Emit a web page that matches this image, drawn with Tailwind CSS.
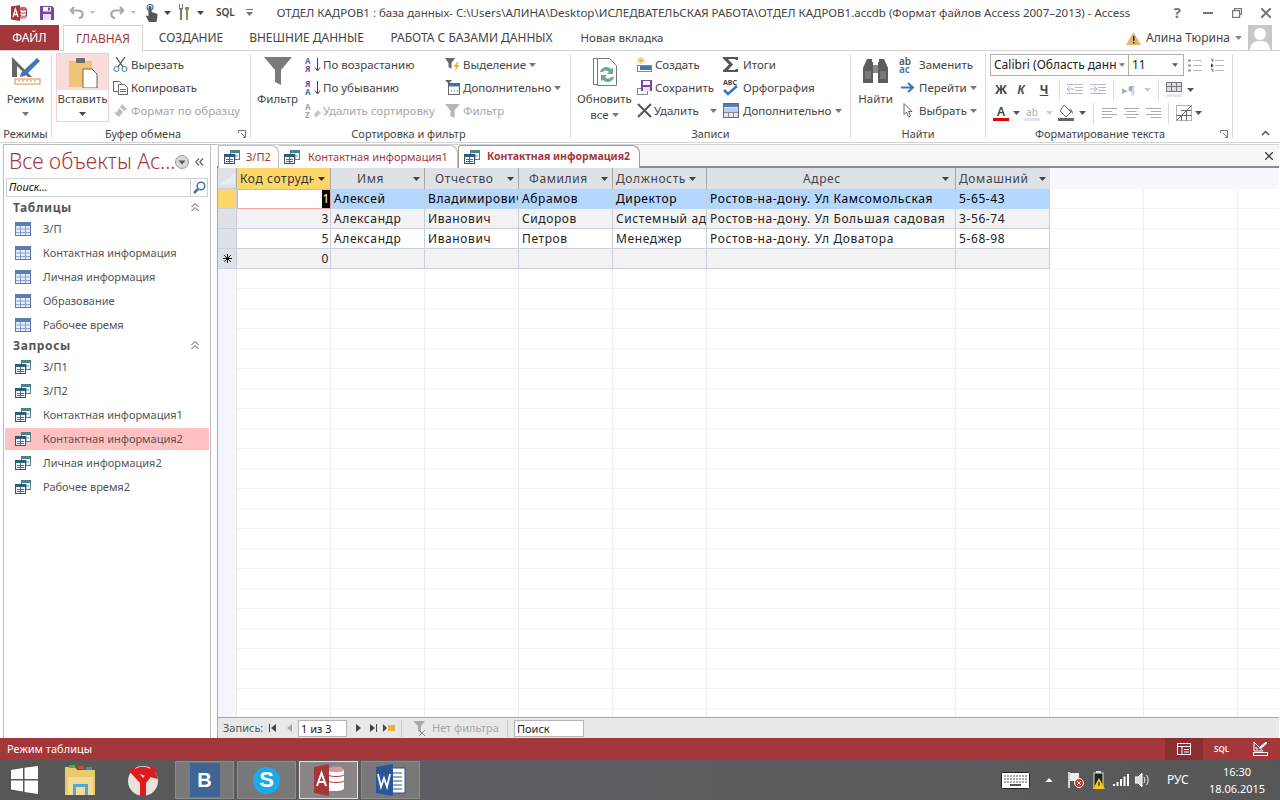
<!DOCTYPE html>
<html lang="ru">
<head>
  <meta charset="UTF-8">
  <title>Access</title>
  <script src="https://cdn.jsdelivr.net/npm/@tailwindcss/browser@4"></script>
</head>
<body class="overflow-hidden">
  <svg class="absolute w-0 h-0">
    <defs>
      <symbol id="tbl" viewBox="0 0 16 14"><rect x=".5" y=".5" width="15" height="13" fill="#e4ebf6" stroke="#5e7ca8"/><rect x="1" y="1" width="14" height="3" fill="#5b7db5"/><path d="M1 7h14M1 10.500h14M5.500 4v9M10.500 4v9" stroke="#8ba3c7"/></symbol>
      <symbol id="qry" viewBox="0 0 16 14"><rect x="6.500" y=".5" width="9" height="9" fill="#fff" stroke="#4f8088"/><rect x="7" y="1" width="8" height="2" fill="#3f8590"/><path d="M11 3.500v6M8 6h6" stroke="#6f8f95"/><rect x=".5" y="4.500" width="10" height="9" fill="#f2f6f7" stroke="#33566b"/><rect x="1" y="5" width="9" height="2" fill="#2f5f80"/><path d="M5.500 7v6M2 9.500h7M2 11.500h7" stroke="#51718a"/></symbol>
      <symbol id="dn" viewBox="0 0 7 4"><path d="M0 0h7L3.500 4z"/></symbol>
    </defs>
  </svg>

  <div class="w-[1280px] h-[800px] flex flex-col overflow-hidden bg-white text-[#444] text-[12px] [font-family:'Noto_Sans',sans-serif]">

    <!-- title bar -->
    <div class="h-[25px] flex items-center shrink-0">
      <svg class="ml-[11px] w-[16px] h-[16px]" viewBox="0 0 16 16"><path d="M0 1.500 9 0v16l-9-1.500z" fill="#a4373a"/><ellipse cx="12" cy="3.500" rx="3.500" ry="1.800" fill="#c9696b"/><path d="M9 4v9h3.500c2 0 3-.8 3-1.500V4c-1 1.500-5 1.500-6 0z" fill="#fff" stroke="#a4373a"/><path d="M9 7.500c1.500 1 5 1 6.500 0M9 10.500c1.500 1 5 1 6.500 0" stroke="#a4373a" fill="none"/><path d="M2 12 4.500 4 7 12M3 9.500h3" stroke="#fff" stroke-width="1.300" fill="none"/></svg>
      <svg class="ml-[13px] w-[14px] h-[14px]" viewBox="0 0 14 14"><path d="M0 0h12l2 2v12H0z" fill="#7b45a8"/><rect x="3" y="1" width="8" height="4.500" fill="#fff"/><rect x="3" y="8" width="8" height="6" fill="#e9dff2"/><rect x="8" y="1.500" width="2" height="3" fill="#7b45a8"/></svg>
      <svg class="ml-[15px] w-[15px] h-[13px]" viewBox="0 0 15 13" fill="none" stroke="#a9a9a9" stroke-width="2.200"><path d="M5 1 1.800 4.500 5 8M2 4.500h7c6 0 6 7 1 7.500"/></svg>
      <svg class="ml-[6px] w-[5px] h-[3px] text-[#bbb] fill-current"><use href="#dn"/></svg>
      <svg class="ml-[15px] w-[15px] h-[13px]" viewBox="0 0 15 13" fill="none" stroke="#a9a9a9" stroke-width="2.200"><path d="m10 1 3.200 3.500L10 8m3-3.500H6c-6 0-6 7-1 7.500"/></svg>
      <svg class="ml-[6px] w-[5px] h-[3px] text-[#bbb] fill-current"><use href="#dn"/></svg>
      <svg class="ml-[9px] w-[13px] h-[18px]" viewBox="0 0 13 18"><circle cx="5" cy="3.500" r="3" fill="none" stroke="#3d76b8" stroke-width="1.200"/><path d="M3.500 3.500c0-2 3-2 3 0V8l5 1.500c1 .5 1.200 1 1 2L11.500 18H4L.5 11.500 3.500 12z" fill="#555"/></svg>
      <svg class="ml-[6px] w-[7px] h-[4px] text-[#444] fill-current"><use href="#dn"/></svg>
      <svg class="ml-[6px] w-[13px] h-[17px]" viewBox="0 0 13 17"><path d="M2 0v5l1 1v10h2V6l1-1V0H5v4H3V0z" fill="#777"/><path d="M8 3h4v3h-1v10H9V6H8z" fill="#9a8a5a"/></svg>
      <svg class="ml-[7px] w-[7px] h-[4px] text-[#444] fill-current"><use href="#dn"/></svg>
      <span class="ml-[12px] text-[10px] font-semibold text-[#444]">SQL</span>
      <svg class="ml-[11px] w-[7px] h-[7px]" viewBox="0 0 7 7"><path d="M0 0h7v1H0zM0 3h7L3.500 7z" fill="#777"/></svg>
      <span class="ml-[24px] w-[860px] whitespace-nowrap text-[#444] text-[11.500px]">ОТДЕЛ КАДРОВ1 : база данных- C:\Users\АЛИНА\Desktop\ИСЛЕДВАТЕЛЬСКАЯ РАБОТА\ОТДЕЛ КАДРОВ1.accdb (Формат файлов Access 2007–2013) - Access</span>
      <span class="ml-[37px] w-[12px] text-[15px] font-bold text-[#777] leading-none">?</span>
      <span class="ml-[17px] w-[10px] h-[2px] bg-[#777]"></span>
      <svg class="ml-[19px] w-[10px] h-[10px]" viewBox="0 0 10 10" fill="none" stroke="#777" stroke-width="1.200"><path d="M2.500 2V.6h7v5.800H8"/><rect x=".6" y="2.600" width="7" height="6.800"/></svg>
      <svg class="ml-[19px] w-[10px] h-[10px]" viewBox="0 0 10 10" stroke="#777" stroke-width="2"><path d="m0 0 10 10M10 0 0 10"/></svg>
    </div>

    <!-- ribbon tabs -->
    <div class="h-[26px] flex shrink-0 border-b border-[#d4d4d4] text-[12px]">
      <div class="w-[59px] h-[25px] bg-[#a4373a] text-white flex items-center justify-center">ФАЙЛ</div>
      <div class="ml-[4px] w-[80px] h-[26px] bg-white border border-b-0 border-[#d4d4d4] text-[#a4373a] flex items-center justify-center">ГЛАВНАЯ</div>
      <div class="ml-[16px] w-[64px] flex items-center justify-center whitespace-nowrap">СОЗДАНИЕ</div>
      <div class="ml-[29px] w-[109px] flex items-center justify-center whitespace-nowrap">ВНЕШНИЕ ДАННЫЕ</div>
      <div class="ml-[29px] w-[163px] flex items-center justify-center whitespace-nowrap">РАБОТА С БАЗАМИ ДАННЫХ</div>
      <div class="ml-[29px] w-[80px] flex items-center justify-center whitespace-nowrap text-[11.500px]">Новая вкладка</div>
      <svg class="ml-[464px] mt-[7px] w-[15px] h-[13px]" viewBox="0 0 15 13"><path d="M7.500 0 15 13H0z" fill="#e5b36b"/><path d="M7 4h1.500v5H7zM7 10h1.500v1.500H7z" fill="#333"/></svg>
      <span class="ml-[5px] w-[84px] flex items-center whitespace-nowrap">Алина Тюрина</span>
      <svg class="ml-[5px] mt-[11px] w-[7px] h-[4px] text-[#888] fill-current"><use href="#dn"/></svg>
      <div class="ml-[6px] w-[24px] h-[25px] bg-[#c8c8c8] overflow-hidden"><svg class="w-[24px] h-[25px]" viewBox="0 0 24 25"><circle cx="12" cy="9" r="6" fill="#fff"/><path d="M2 25c0-7 5-9 10-9s10 2 10 9z" fill="#fff"/></svg></div>
    </div>

    <!-- ribbon -->
    <div class="h-[92px] flex shrink-0 border-b border-[#d4d4d4] text-[11.500px]">

      <!-- режимы -->
      <div class="w-[51px] flex flex-col shrink-0 relative">
        <div class="h-[74px] flex flex-col items-center pt-[4px]">
          <svg class="w-[30px] h-[30px]" viewBox="0 0 30 30"><path d="M1 2v20h20z" fill="#666"/><path d="M6 11v11h11z" fill="#fff"/><path d="M10 18 26 3l3 3-15 15-5 1z" fill="#3f78b8"/><rect x="4" y="24" width="25" height="5" fill="#fff" stroke="#e08a2e"/><path d="M8 25v2M12 25v2M16 25v2M20 25v2M24 25v2" stroke="#e08a2e"/></svg>
          <span class="mt-[6px] leading-[16px]">Режим</span>
          <svg class="mt-[5px] w-[7px] h-[4px] text-[#777] fill-current"><use href="#dn"/></svg>
        </div>
        <div class="text-center leading-[17px] text-[11px]">Режимы</div>
      </div>
      <div class="w-px h-[84px] mt-[3px] bg-[#dcdcdc]"></div>

      <!-- буфер обмена -->
      <div class="w-[198px] flex flex-col shrink-0 relative">
        <div class="h-[74px] flex">
          <div class="ml-[4px] mt-[2px] w-[53px] h-[69px] flex flex-col border border-[#f6d0d0]">
            <div class="h-[36px] bg-[#fadcdc] flex justify-center pt-[3px]">
              <svg class="w-[30px] h-[31px]" viewBox="0 0 30 31"><rect x="1" y="4" width="23" height="26" fill="#f0c477"/><rect x="8" y="1" width="9" height="5" rx="1" fill="#6b6b6b"/><path d="M15 12h9l5 5v14H15z" fill="#fff" stroke="#666"/></svg>
            </div>
            <div class="flex-1 flex flex-col items-center bg-white">
              <span class="leading-[18px]">Вставить</span>
              <svg class="mt-[4px] w-[7px] h-[4px] text-[#444] fill-current"><use href="#dn"/></svg>
            </div>
          </div>
          <div class="ml-[4px] flex flex-col pt-[2px]">
            <div class="h-[23px] flex items-center gap-[3px]">
              <svg class="w-[15px] h-[15px]" viewBox="0 0 15 15" fill="none"><path d="M3 0l7 10M12 0 5 10" stroke="#555" stroke-width="1.300"/><circle cx="3.500" cy="12" r="2.500" stroke="#3d76b8"/><circle cx="11.500" cy="12" r="2.500" stroke="#3d76b8"/></svg>
              <span>Вырезать</span>
            </div>
            <div class="h-[23px] flex items-center gap-[3px]">
              <svg class="w-[15px] h-[15px]" viewBox="0 0 15 15" fill="#fff" stroke="#666"><path d="M.5 1.500h6l2 2v8h-8z"/><path d="M5.500 4.500h6l3 3v7h-9z"/><path d="M7 9.500h6M7 11.500h6" stroke="#3d76b8"/></svg>
              <span>Копировать</span>
            </div>
            <div class="h-[23px] flex items-center gap-[3px] text-[#a6a6a6]">
              <svg class="w-[15px] h-[15px]" viewBox="0 0 15 15" fill="#bdbdbd"><path d="M9 1l5 5-3 2-4-4zM6 5l4 4-4 5-5-4 3-1z"/></svg>
              <span class="whitespace-nowrap">Формат по образцу</span>
            </div>
          </div>
        </div>
        <div class="flex justify-center leading-[17px] text-[11px] pr-[16px]">Буфер обмена</div>
        <svg class="absolute right-[4px] bottom-[4px] w-[8px] h-[8px]" viewBox="0 0 8 8" fill="none" stroke="#777"><path d="M.5 3V.5H7.500V7.500H5M3 3l4 4"/></svg>
      </div>
      <div class="w-px h-[84px] mt-[3px] bg-[#dcdcdc]"></div>

      <!-- сортировка и фильтр -->
      <div class="w-[319px] flex flex-col shrink-0">
        <div class="h-[74px] flex">
          <div class="ml-[6px] w-[41px] flex flex-col items-center pt-[6px]">
            <svg class="w-[28px] h-[28px]" viewBox="0 0 28 28"><path d="M0 0h28L17 13v15l-6-3V13z" fill="#7a7a7a"/></svg>
            <span class="mt-[6px] leading-[16px]">Фильтр</span>
          </div>
          <div class="ml-[7px] w-[140px] flex flex-col pt-[2px]">
            <div class="h-[23px] flex items-center">
              <span class="w-[9px] text-[8px] leading-[8px] font-bold"><span class="block text-[#3d76b8]">А</span><span class="block text-[#7b45a8]">Я</span></span>
              <svg class="w-[7px] h-[16px]" viewBox="0 0 7 16"><path d="M3.500 1v12M1 10.500 3.500 14 6 10.500" stroke="#444" fill="none"/></svg>
              <span class="ml-[2px] whitespace-nowrap">По возрастанию</span>
            </div>
            <div class="h-[23px] flex items-center">
              <span class="w-[9px] text-[8px] leading-[8px] font-bold"><span class="block text-[#7b45a8]">Я</span><span class="block text-[#3d76b8]">А</span></span>
              <svg class="w-[7px] h-[16px]" viewBox="0 0 7 16"><path d="M3.500 1v12M1 10.500 3.500 14 6 10.500" stroke="#444" fill="none"/></svg>
              <span class="ml-[2px] whitespace-nowrap">По убыванию</span>
            </div>
            <div class="h-[23px] flex items-center text-[#a6a6a6]">
              <span class="w-[9px] text-[8px] leading-[8px] font-bold"><span class="block">A</span><span class="block">Z</span></span>
              <svg class="w-[8px] h-[16px]" viewBox="0 0 8 16"><path d="m0 11 4-4 3 3-4 4H1z" fill="#c8c8c8"/></svg>
              <span class="ml-[1px] whitespace-nowrap">Удалить сортировку</span>
            </div>
          </div>
          <div class="w-[120px] flex flex-col pt-[2px]">
            <div class="h-[23px] flex items-center gap-[3px]">
              <svg class="w-[15px] h-[15px]" viewBox="0 0 15 15"><path d="M0 1h10L6.500 6v6l-3-2V6z" fill="#666"/><path d="M12 5 8.500 10H11l-1.500 5 5-7H12l1.500-3z" fill="#e8b23a"/></svg>
              <span>Выделение</span><svg class="w-[7px] h-[4px] text-[#777] fill-current"><use href="#dn"/></svg>
            </div>
            <div class="h-[23px] flex items-center gap-[3px]">
              <svg class="w-[15px] h-[15px]" viewBox="0 0 15 15"><path d="M0 0h7L4.500 3v3L3 5V3z" fill="#666"/><rect x="3.500" y="3.500" width="11" height="11" fill="#fff" stroke="#666"/><rect x="4" y="4" width="10" height="2.500" fill="#3d76b8"/><path d="M6 11h1M9 11h1M12 11h1" stroke="#555"/></svg>
              <span class="whitespace-nowrap">Дополнительно</span><svg class="w-[7px] h-[4px] text-[#777] fill-current"><use href="#dn"/></svg>
            </div>
            <div class="h-[23px] flex items-center gap-[3px] text-[#a6a6a6]">
              <svg class="w-[15px] h-[15px]" viewBox="0 0 15 15"><path d="M0 1h15L9.500 7.500V15l-4-2V7.500z" fill="#b5b5b5"/></svg>
              <span>Фильтр</span>
            </div>
          </div>
        </div>
        <div class="flex justify-center leading-[17px] text-[11px] pr-[4px]">Сортировка и фильтр</div>
      </div>
      <div class="w-px h-[84px] mt-[3px] bg-[#dcdcdc]"></div>

      <!-- записи -->
      <div class="w-[279px] flex flex-col shrink-0">
        <div class="h-[74px] flex">
          <div class="ml-[6px] w-[55px] flex flex-col items-center pt-[6px]">
            <svg class="w-[24px] h-[30px]" viewBox="0 0 24 30" fill="#fff" stroke="#777"><path d="M.5 1.500h13v26H.5z"/><path d="M4.500 1.500h12l7 7v20h-19z"/><path d="M7 15a6.500 6.500 0 0 1 11-3l2-1v6h-6l2-2c-2-2-5-2-6 0zM21 20a6.500 6.500 0 0 1-11 3l-2 1v-6h6l-2 2c2 2 5 2 6 0z" fill="#6fa892" stroke="none"/></svg>
            <span class="leading-[16px] mt-[4px]">Обновить</span>
            <span class="flex items-center gap-[3px] leading-[15px]">все<svg class="w-[7px] h-[4px] text-[#777] fill-current"><use href="#dn"/></svg></span>
          </div>
          <div class="ml-[5px] w-[86px] flex flex-col pt-[2px]">
            <div class="h-[23px] flex items-center gap-[3px]">
              <svg class="w-[15px] h-[15px]" viewBox="0 0 15 15"><path d="M4 0v7M.5 3.500h7M1.500 1l5 5M6.500 1l-5 5" stroke="#e8b23a"/><rect x=".5" y="8.500" width="14" height="6" fill="#fff" stroke="#888"/><rect x="3" y="9" width="11" height="4" fill="#3f78a8"/></svg>
              <span>Создать</span>
            </div>
            <div class="h-[23px] flex items-center gap-[3px]">
              <svg class="w-[15px] h-[15px]" viewBox="0 0 15 15"><rect x=".5" y="8.500" width="10" height="6" fill="#fff" stroke="#888"/><rect x="4" y="0" width="11" height="11" fill="#7b45a8"/><rect x="6" y="1" width="7" height="4" fill="#fff"/><rect x="6" y="7" width="7" height="4" fill="#e9dff2"/></svg>
              <span>Сохранить</span>
            </div>
            <div class="h-[23px] flex items-center gap-[2px]">
              <svg class="w-[15px] h-[15px]" viewBox="0 0 15 15" stroke="#555" stroke-width="2"><path d="m1 1 13 13M14 1 1 14"/></svg>
              <span>Удалить</span><svg class="ml-[9px] w-[7px] h-[4px] text-[#777] fill-current"><use href="#dn"/></svg>
            </div>
          </div>
          <div class="w-[125px] flex flex-col pt-[2px]">
            <div class="h-[23px] flex items-center gap-[4px]">
              <svg class="w-[16px] h-[15px]" viewBox="0 0 16 15"><path d="M0 0h15v3h-2l-1-1H5l5 5.500L5 13h7l1-1h2v3H0v-1.500L6 7.500 0 1.500z" fill="#555"/></svg>
              <span>Итоги</span>
            </div>
            <div class="h-[23px] flex items-center gap-[4px]">
              <span class="relative w-[16px] h-[16px]"><span class="absolute left-0 -top-[2px] text-[7px] font-bold text-[#444] leading-[9px]">ABC</span><svg class="absolute left-0 top-[5px] w-[16px] h-[11px]" viewBox="0 0 16 11" fill="none" stroke="#3d76b8" stroke-width="2.500"><path d="m1 5 4 4 9-8"/></svg></span>
              <span>Орфография</span>
            </div>
            <div class="h-[23px] flex items-center gap-[4px]">
              <svg class="w-[16px] h-[15px]" viewBox="0 0 16 15"><rect x=".5" y=".5" width="15" height="14" fill="#e4e8ee" stroke="#667"/><rect x="1" y="1" width="14" height="3" fill="#5b7db5"/><rect x="1" y="5" width="14" height="4" fill="#bcd0e8"/><path d="M1 9.500h14M5.500 9v5M10.500 9v5" stroke="#889"/></svg>
              <span class="whitespace-nowrap">Дополнительно</span><svg class="w-[7px] h-[4px] text-[#777] fill-current"><use href="#dn"/></svg>
            </div>
          </div>
        </div>
        <div class="flex justify-center leading-[17px] text-[11px]">Записи</div>
      </div>
      <div class="w-px h-[84px] mt-[3px] bg-[#dcdcdc]"></div>

      <!-- найти -->
      <div class="w-[134px] flex flex-col shrink-0">
        <div class="h-[74px] flex">
          <div class="ml-[7px] w-[35px] flex flex-col items-center pt-[8px]">
            <svg class="w-[25px] h-[24px]" viewBox="0 0 25 24"><path d="M4 0h5v3h1v21H0V9zM21 0h-5v3h-1v21h10V9z" fill="#5c5c5c"/><rect x="10" y="6" width="5" height="8" fill="#888"/><path d="M2 12h6v8H2zM17 12h6v8h-6z" fill="#777"/></svg>
            <span class="mt-[8px] leading-[16px]">Найти</span>
          </div>
          <div class="ml-[6px] flex flex-col pt-[2px]">
            <div class="h-[23px] flex items-center gap-[3px]">
              <span class="w-[17px] text-[10px] font-semibold leading-[8px]"><span class="block text-[#555]">ab</span><span class="block text-[#3d76b8]">ac</span></span>
              <span>Заменить</span>
            </div>
            <div class="h-[23px] flex items-center gap-[3px]">
              <svg class="w-[17px] h-[13px]" viewBox="0 0 17 13" fill="none" stroke="#3d76b8" stroke-width="2"><path d="M2 6.500h12M9 2l5 4.500L9 11"/></svg>
              <span>Перейти</span><svg class="w-[7px] h-[4px] text-[#777] fill-current"><use href="#dn"/></svg>
            </div>
            <div class="h-[23px] flex items-center gap-[3px]">
              <svg class="w-[17px] h-[15px]" viewBox="0 0 17 15"><path d="M5 .5v11l2.500-2.500 2 5 2-1-2-4.500h3.500z" fill="#fff" stroke="#666"/></svg>
              <span>Выбрать</span><svg class="w-[7px] h-[4px] text-[#777] fill-current"><use href="#dn"/></svg>
            </div>
          </div>
        </div>
        <div class="flex justify-center leading-[17px] text-[11px]">Найти</div>
      </div>
      <div class="w-px h-[84px] mt-[3px] bg-[#dcdcdc]"></div>

      <!-- форматирование текста -->
      <div class="w-[246px] flex flex-col shrink-0 relative">
        <div class="h-[74px] flex flex-col pl-[4px] pt-[3px]">
          <div class="h-[22px] flex items-center">
            <div class="w-[139px] h-[22px] border border-[#b0b0b0] flex items-center pl-[3px] text-[12px] text-[#222] overflow-hidden whitespace-nowrap">
              <span class="w-[122px] overflow-hidden">Calibri (Область данных)</span><svg class="ml-[3px] w-[6px] h-[4px] shrink-0 text-[#777] fill-current"><use href="#dn"/></svg>
            </div>
            <div class="w-[55px] h-[22px] border border-l-0 border-[#b0b0b0] flex items-center pl-[3px] text-[12px] text-[#222]">
              <span class="w-[40px]">11</span><svg class="w-[6px] h-[4px] text-[#555] fill-current"><use href="#dn"/></svg>
            </div>
            <svg class="ml-[4px] w-[14px] h-[14px]" viewBox="0 0 14 14" stroke="#bbb"><path d="M5 2.500h9M5 7.500h9M5 12.500h9"/><path d="M0 2.500h3M0 7.500h3M0 12.500h3" stroke="#999" stroke-width="2"/></svg>
            <svg class="ml-[8px] w-[14px] h-[14px]" viewBox="0 0 14 14" stroke="#bbb"><path d="M5 2.500h9M5 7.500h9M5 12.500h9M1 1h2v3M1 6h2v3H1M1 11h2v3"/></svg>
          </div>
          <div class="h-[25px] flex items-center pt-[2px]">
            <span class="ml-[3px] w-[16px] font-bold text-[12px] text-[#444] text-center">Ж</span>
            <span class="ml-[4px] w-[16px] font-bold italic text-[12px] text-[#555] text-center">К</span>
            <span class="ml-[7px] w-[16px] font-bold underline text-[12px] text-[#444] text-center">Ч</span>
            <span class="ml-[7px] w-px h-[21px] bg-[#dcdcdc]"></span>
            <svg class="ml-[7px] w-[16px] h-[11px]" viewBox="0 0 16 11" stroke="#bbb"><path d="M0 .5h16M8 3.500h8M8 6.500h8M0 9.500h16"/><path d="M7 5H0M3 2 0 5l3 3" stroke="#9ab5d5" fill="none"/></svg>
            <svg class="ml-[7px] w-[16px] h-[11px]" viewBox="0 0 16 11" stroke="#bbb"><path d="M0 .5h16M8 3.500h8M8 6.500h8M0 9.500h16"/><path d="M0 5h7M4 2l3 3-3 3" stroke="#9ab5d5" fill="none"/></svg>
            <span class="ml-[7px] w-px h-[21px] bg-[#dcdcdc]"></span>
            <span class="ml-[8px] w-[14px] text-[#aaa] text-[11px] leading-none whitespace-nowrap">▸¶</span>
            <svg class="ml-[8px] w-[7px] h-[4px] text-[#ccc] fill-current"><use href="#dn"/></svg>
            <span class="ml-[7px] w-px h-[21px] bg-[#dcdcdc]"></span>
            <svg class="ml-[7px] w-[16px] h-[15px]" viewBox="0 0 16 15"><rect x=".5" y=".5" width="15" height="9" fill="#d6e0ef" stroke="#777"/><path d="M0 4.500h16M5.500 0v10M10.500 0v10" stroke="#777"/><rect y="12" width="16" height="3" fill="#e6e6e6"/></svg>
            <svg class="ml-[5px] w-[7px] h-[4px] text-[#555] fill-current"><use href="#dn"/></svg>
          </div>
          <div class="h-[24px] flex items-center">
            <span class="w-[16px] ml-[3px] flex flex-col items-center leading-[12px] font-semibold text-[#444] text-[12px]">A<span class="w-[16px] h-[3px] bg-[#e00000]"></span></span>
            <svg class="ml-[4px] w-[7px] h-[4px] text-[#555] fill-current"><use href="#dn"/></svg>
            <span class="ml-[4px] w-[16px] flex flex-col items-center leading-[12px] text-[#aaa] text-[10px]">ab<span class="w-[16px] h-[3px] bg-[#e3e0e6]"></span></span>
            <svg class="ml-[6px] w-[7px] h-[4px] text-[#ccc] fill-current"><use href="#dn"/></svg>
            <span class="ml-[5px] w-[16px] flex flex-col items-center">
              <svg class="w-[16px] h-[13px]" viewBox="0 0 16 13"><path d="m6 0 7 7-5 5-6-6z" fill="#fff" stroke="#666"/><path d="M11 4c3 0 4 3 4 5z" fill="#3d76b8"/></svg>
              <span class="w-[16px] h-[3px] bg-[#666]"></span>
            </span>
            <svg class="ml-[5px] w-[7px] h-[4px] text-[#555] fill-current"><use href="#dn"/></svg>
            <span class="ml-[7px] w-px h-[21px] bg-[#dcdcdc]"></span>
            <svg class="ml-[8px] w-[15px] h-[11px]" viewBox="0 0 15 11" stroke="#aaa"><path d="M0 .5h15M0 3.500h10M0 6.500h15M0 9.500h10"/></svg>
            <svg class="ml-[7px] w-[15px] h-[11px]" viewBox="0 0 15 11" stroke="#aaa"><path d="M0 .5h15M2.500 3.500h10M0 6.500h15M2.500 9.500h10"/></svg>
            <svg class="ml-[7px] w-[15px] h-[11px]" viewBox="0 0 15 11" stroke="#aaa"><path d="M0 .5h15M5 3.500h10M0 6.500h15M5 9.500h10"/></svg>
            <span class="ml-[7px] w-px h-[21px] bg-[#dcdcdc]"></span>
            <svg class="ml-[7px] w-[16px] h-[16px]" viewBox="0 0 16 16" fill="none" stroke="#666"><path d="M.5.5h15v15H.5z" stroke-dasharray="1 1"/><path d="M.5 15.500 15.500.5M5.500 10.500v5M10.500 5.500v10M.5 10.500h15M5 5.500h10.500"/></svg>
            <svg class="ml-[3px] w-[7px] h-[4px] text-[#555] fill-current"><use href="#dn"/></svg>
          </div>
        </div>
        <div class="flex justify-center leading-[17px] text-[11px] pr-[18px]">Форматирование текста</div>
        <svg class="absolute right-[4px] bottom-[4px] w-[8px] h-[8px]" viewBox="0 0 8 8" fill="none" stroke="#777"><path d="M.5 3V.5H7.500V7.500H5M3 3l4 4"/></svg>
      </div>
      <div class="w-px h-[84px] mt-[3px] bg-[#dcdcdc]"></div>
      <div class="flex-1 flex items-end justify-end pr-[10px] pb-[6px]">
        <svg class="w-[9px] h-[6px]" viewBox="0 0 9 6" fill="none" stroke="#555" stroke-width="1.500"><path d="m1 5 3.500-3.500L8 5"/></svg>
      </div>
    </div>

    <!-- workspace -->
    <div class="flex-1 flex min-h-0 pl-[3px] pt-[1px] pr-[1px]">
      <!-- navigation pane -->
      <div class="w-[208px] shrink-0 border-l border-t border-r border-[#bdbdbd] flex flex-col">
        <div class="h-[33px] flex items-center pl-[5px] shrink-0">
          <span class="w-[164px] whitespace-nowrap text-[#a4373a] text-[21px] leading-none font-light">Все объекты Ac...</span>
          <svg class="ml-[2px] w-[14px] h-[14px]" viewBox="0 0 14 14"><circle cx="7" cy="7" r="6.500" fill="#d8d8d8" stroke="#999"/><path d="M3.500 5.500h7L7 9.500z" fill="#555"/></svg>
          <svg class="ml-[6px] w-[9px] h-[8px]" viewBox="0 0 9 8" fill="none" stroke="#666" stroke-width="1.300"><path d="M4 .5.800 4 4 7.500M8 .5 4.800 4 8 7.500"/></svg>
        </div>
        <div class="mx-[2px] h-[19px] border border-[#d0d0d0] flex items-center pl-[2px] shrink-0">
          <span class="flex-1 italic text-[11px] text-[#111]">Поиск...</span>
          <span class="w-[17px] h-[17px] border-l border-[#d0d0d0] flex items-center justify-center">
            <svg class="w-[13px] h-[13px]" viewBox="0 0 13 13" fill="none" stroke="#3d76b8" stroke-width="1.500"><circle cx="8" cy="5" r="3.800"/><path d="M5 8 1 12" stroke-width="2.500"/></svg>
          </span>
        </div>
        <div class="h-[19px] mt-[1px] flex items-center pl-[9px] pr-[11px] justify-between font-bold text-[#555] tracking-[0.6px] shrink-0">
          <span>Таблицы</span>
          <svg class="w-[8px] h-[9px]" viewBox="0 0 8 9" fill="none" stroke="#555"><path d="m.5 4 3.500-3.500L7.500 4M.5 8 4 4.500 7.500 8"/></svg>
        </div>
        <div class="flex flex-col text-[#555] text-[11px] shrink-0">
          <div class="h-[24px] flex items-center pl-[11px] gap-[12px]"><svg class="w-[16px] h-[14px]"><use href="#tbl"/></svg>З/П</div>
          <div class="h-[24px] flex items-center pl-[11px] gap-[12px]"><svg class="w-[16px] h-[14px]"><use href="#tbl"/></svg>Контактная информация</div>
          <div class="h-[24px] flex items-center pl-[11px] gap-[12px]"><svg class="w-[16px] h-[14px]"><use href="#tbl"/></svg>Личная информация</div>
          <div class="h-[24px] flex items-center pl-[11px] gap-[12px]"><svg class="w-[16px] h-[14px]"><use href="#tbl"/></svg>Образование</div>
          <div class="h-[24px] flex items-center pl-[11px] gap-[12px]"><svg class="w-[16px] h-[14px]"><use href="#tbl"/></svg>Рабочее время</div>
        </div>
        <div class="h-[19px] -mt-[1px] flex items-center pl-[9px] pr-[11px] justify-between font-bold text-[#555] tracking-[0.6px] shrink-0">
          <span>Запросы</span>
          <svg class="w-[8px] h-[9px]" viewBox="0 0 8 9" fill="none" stroke="#555"><path d="m.5 4 3.500-3.500L7.500 4M.5 8 4 4.500 7.500 8"/></svg>
        </div>
        <div class="flex flex-col text-[#555] text-[11px] shrink-0">
          <div class="h-[24px] flex items-center pl-[11px] gap-[12px]"><svg class="w-[16px] h-[14px]"><use href="#qry"/></svg>З/П1</div>
          <div class="h-[24px] flex items-center pl-[11px] gap-[12px]"><svg class="w-[16px] h-[14px]"><use href="#qry"/></svg>З/П2</div>
          <div class="h-[24px] flex items-center pl-[11px] gap-[12px]"><svg class="w-[16px] h-[14px]"><use href="#qry"/></svg>Контактная информация1</div>
          <div class="h-[22px] my-[1px] mx-[1px] bg-[#ffc1c1] flex items-center pl-[10px] gap-[12px]"><svg class="w-[16px] h-[14px]"><use href="#qry"/></svg>Контактная информация2</div>
          <div class="h-[24px] flex items-center pl-[11px] gap-[12px]"><svg class="w-[16px] h-[14px]"><use href="#qry"/></svg>Личная информация2</div>
          <div class="h-[24px] flex items-center pl-[11px] gap-[12px]"><svg class="w-[16px] h-[14px]"><use href="#qry"/></svg>Рабочее время2</div>
        </div>
      </div>
      <div class="w-[6px] border-t border-[#bdbdbd] shrink-0"></div>

      <!-- document -->
      <div class="flex-1 min-w-0 flex flex-col border-t border-[#d4d4d4]">
        <div class="h-[23px] bg-[#f7f7f7] flex shrink-0 relative border-b-2 border-[#8c8c8c]">
          <div class="ml-[1px] w-[61px] h-[23px] bg-white border border-b-0 border-[#bdbdbd] rounded-tr-[8px] flex items-center pl-[5px] gap-[6px] text-[#a4373a] text-[11px]"><svg class="w-[16px] h-[14px]"><use href="#qry"/></svg>З/П2</div>
          <div class="w-[179px] h-[23px] bg-white border border-l-0 border-b-0 border-[#bdbdbd] rounded-tr-[8px] flex items-center pl-[5px] gap-[8px] text-[#a4373a] text-[11px] whitespace-nowrap"><svg class="w-[16px] h-[14px]"><use href="#qry"/></svg>Контактная информация1</div>
          <div class="w-[182px] h-[23px] bg-white border border-b-0 border-[#a69c8c] rounded-tr-[8px] rounded-tl-[3px] flex items-center pl-[5px] gap-[7px] text-[#a4373a] text-[10.500px] font-bold whitespace-nowrap"><svg class="w-[16px] h-[14px]"><use href="#qry"/></svg>Контактная информация2</div>
          <svg class="absolute right-[6px] top-[7px] w-[8px] h-[8px]" viewBox="0 0 8 8" stroke="#444" stroke-width="1.300"><path d="m0 0 8 8M8 0 0 8"/></svg>
        </div>

        <div class="flex-1 min-h-0 relative bg-white border-l border-[#a8a8a8] overflow-hidden bg-[repeating-linear-gradient(to_bottom,transparent_0,transparent_19px,#f3f3f3_19px,#f3f3f3_20px)] bg-[position:0_1px]">
          <!-- empty sheet columns -->
          <div class="absolute inset-0 flex pointer-events-none">
            <div class="w-[19px] bg-[#f4f6fb] border-r border-[#e8e8e8]"></div>
            <div class="w-[94px] border-r border-[#f0f0f0]"></div><div class="w-[94px] border-r border-[#f0f0f0]"></div><div class="w-[94px] border-r border-[#f0f0f0]"></div><div class="w-[94px] border-r border-[#f0f0f0]"></div><div class="w-[94px] border-r border-[#f0f0f0]"></div><div class="w-[249px] border-r border-[#f0f0f0]"></div><div class="w-[94px] border-r border-[#f0f0f0]"></div><div class="w-[94px] border-r border-[#f0f0f0]"></div><div class="w-[94px] border-r border-[#f0f0f0]"></div>
          </div>
          <div class="absolute left-0 top-0 right-0 h-[21px] bg-[#f6f8fd]"></div>

          <div class="relative w-[832px] grid grid-cols-[19px_94px_94px_94px_94px_94px_249px_94px] grid-rows-[21px_20px_20px_20px_20px] text-[12px] tracking-[0.6px] text-[#222] [&>div]:overflow-hidden [&>div]:whitespace-nowrap [&>div]:flex [&>div]:items-center">
            <div class="bg-[#dee1e6] border-r border-[#a8a8a8] border-b border-b-[#c8d0e0] justify-center"><svg class="w-[17px] h-[13px]" viewBox="0 0 17 13"><path d="M1 12.500 16 1v11.500z" fill="#e9ebef"/></svg></div>
            <div class="bg-[#fdd869] border-r border-[#a8a8a8] pl-[3px] text-[#333]"><span class="w-[74px] overflow-hidden shrink-0">Код сотрудника</span><svg class="ml-[4px] w-[7px] h-[4px] shrink-0 text-[#333] fill-current"><use href="#dn"/></svg></div>
            <div class="bg-[#dee1e6] border-r border-[#a8a8a8] justify-between pl-[26px] pr-[4px] text-[#444]"><span>Имя</span><svg class="w-[7px] h-[4px] text-[#444] fill-current"><use href="#dn"/></svg></div>
            <div class="bg-[#dee1e6] border-r border-[#a8a8a8] justify-between pl-[10px] pr-[4px] text-[#444]"><span>Отчество</span><svg class="w-[7px] h-[4px] text-[#444] fill-current"><use href="#dn"/></svg></div>
            <div class="bg-[#dee1e6] border-r border-[#a8a8a8] justify-between pl-[10px] pr-[4px] text-[#444]"><span>Фамилия</span><svg class="w-[7px] h-[4px] text-[#444] fill-current"><use href="#dn"/></svg></div>
            <div class="bg-[#dee1e6] border-r border-[#a8a8a8] justify-between pl-[3px] pr-[10px] text-[#444]"><span>Должность</span><svg class="w-[7px] h-[4px] text-[#444] fill-current"><use href="#dn"/></svg></div>
            <div class="bg-[#dee1e6] border-r border-[#a8a8a8] pl-[96px] text-[#444]"><span class="w-[139px]">Адрес</span><svg class="w-[7px] h-[4px] text-[#444] fill-current"><use href="#dn"/></svg></div>
            <div class="bg-[#dee1e6] justify-between pl-[3px] pr-[4px] text-[#444]"><span>Домашний</span><svg class="w-[7px] h-[4px] text-[#444] fill-current"><use href="#dn"/></svg></div>

            <div class="bg-[#fdd869] border-r border-[#c8d0e0] border-b border-b-[#c8d0e0]"></div>
            <div class="bg-white border border-[#f5a3a3] justify-end"><span class="bg-black text-white pl-[1px]">1</span></div>
            <div class="bg-[#b3d7ff] text-black pl-[3px] border-r border-[#c8d0e0]">Алексей</div>
            <div class="bg-[#b3d7ff] text-black pl-[3px] border-r border-[#c8d0e0]">Владимирович</div>
            <div class="bg-[#b3d7ff] text-black pl-[3px] border-r border-[#c8d0e0]">Абрамов</div>
            <div class="bg-[#b3d7ff] text-black pl-[3px] border-r border-[#c8d0e0]">Директор</div>
            <div class="bg-[#b3d7ff] text-black pl-[3px] border-r border-[#c8d0e0]">Ростов-на-дону. Ул Камсомольская</div>
            <div class="bg-[#b3d7ff] text-black pl-[3px]">5-65-43</div>

            <div class="bg-[#dee1e6] border-r border-[#c8d0e0] border-b border-[#c8d0e0]"></div>
            <div class="bg-[#f2f2f2] border-r border-b border-[#c8d0e0] justify-end pr-[1px]">3</div>
            <div class="bg-[#f2f2f2] border-r border-b border-[#c8d0e0] pl-[3px]">Александр</div>
            <div class="bg-[#f2f2f2] border-r border-b border-[#c8d0e0] pl-[3px]">Иванович</div>
            <div class="bg-[#f2f2f2] border-r border-b border-[#c8d0e0] pl-[3px]">Сидоров</div>
            <div class="bg-[#f2f2f2] border-r border-b border-[#c8d0e0] pl-[3px]">Системный администратор</div>
            <div class="bg-[#f2f2f2] border-r border-b border-[#c8d0e0] pl-[3px]">Ростов-на-дону. Ул Большая садовая</div>
            <div class="bg-[#f2f2f2] border-r border-b border-[#c8d0e0] pl-[3px]">3-56-74</div>

            <div class="bg-[#dee1e6] border-r border-[#c8d0e0] border-b border-[#c8d0e0]"></div>
            <div class="bg-white border-r border-b border-[#c8d0e0] justify-end pr-[1px]">5</div>
            <div class="bg-white border-r border-b border-[#c8d0e0] pl-[3px]">Александр</div>
            <div class="bg-white border-r border-b border-[#c8d0e0] pl-[3px]">Иванович</div>
            <div class="bg-white border-r border-b border-[#c8d0e0] pl-[3px]">Петров</div>
            <div class="bg-white border-r border-b border-[#c8d0e0] pl-[3px]">Менеджер</div>
            <div class="bg-white border-r border-b border-[#c8d0e0] pl-[3px]">Ростов-на-дону. Ул Доватора</div>
            <div class="bg-white border-r border-b border-[#c8d0e0] pl-[3px]">5-68-98</div>

            <div class="bg-[#dee1e6] border-r border-[#c8d0e0] border-b border-[#c8d0e0] justify-center"><svg class="w-[9px] h-[9px]" viewBox="0 0 9 9" stroke="#111"><path d="M4.500 0v9M0 4.500h9M1.200 1.200l6.600 6.600M7.800 1.200 1.200 7.800"/></svg></div>
            <div class="bg-[#f2f2f2] border-r border-b border-[#c8d0e0] justify-end pr-[1px]">0</div>
            <div class="bg-[#f2f2f2] border-r border-b border-[#c8d0e0]"></div>
            <div class="bg-[#f2f2f2] border-r border-b border-[#c8d0e0]"></div>
            <div class="bg-[#f2f2f2] border-r border-b border-[#c8d0e0]"></div>
            <div class="bg-[#f2f2f2] border-r border-b border-[#c8d0e0]"></div>
            <div class="bg-[#f2f2f2] border-r border-b border-[#c8d0e0]"></div>
            <div class="bg-[#f2f2f2] border-r border-b border-[#c8d0e0]"></div>
          </div>
        </div>

        <!-- record navigator -->
        <div class="h-[21px] shrink-0 bg-[#e8e8e8] border-l border-t border-[#a8a8a8] flex items-center text-[11px] text-[#555]">
          <span class="ml-[5px] w-[45px]">Запись:</span>
          <svg class="ml-[1px] w-[7px] h-[8px]" viewBox="0 0 7 8"><path d="M0 0h1v8H0zM7 0v8L2 4z" fill="#444"/></svg>
          <svg class="ml-[11px] w-[5px] h-[8px]" viewBox="0 0 5 8"><path d="M5 0v8L0 4z" fill="#aaa"/></svg>
          <span class="ml-[6px] w-[49px] h-[17px] bg-white border border-[#b5b5b5] pl-[2px] text-[#222] leading-[15px]">1 из 3</span>
          <svg class="ml-[9px] w-[5px] h-[8px]" viewBox="0 0 5 8"><path d="M0 0v8l5-4z" fill="#444"/></svg>
          <svg class="ml-[9px] w-[7px] h-[8px]" viewBox="0 0 7 8"><path d="M6 0h1v8H6zM0 0v8l5-4z" fill="#444"/></svg>
          <svg class="ml-[6px] w-[12px] h-[8px]" viewBox="0 0 12 8"><path d="M0 0v8l4-4z" fill="#444"/><rect x="5" y="1" width="7" height="6" fill="#e8b23a"/></svg>
          <span class="ml-[6px] w-px h-[17px] bg-[#c8c8c8]"></span>
          <svg class="ml-[11px] w-[14px] h-[15px]" viewBox="0 0 14 15"><path d="M0 0h12L8 5v7L5 10V5z" fill="#aaa"/><path d="m6 9 6 6M12 9l-6 6" stroke="#888"/></svg>
          <span class="ml-[5px] w-[72px] text-[#a6a6a6] whitespace-nowrap">Нет фильтра</span>
          <span class="ml-[3px] w-px h-[17px] bg-[#c8c8c8]"></span>
          <span class="ml-[6px] w-[70px] h-[17px] bg-white border border-[#b5b5b5] pl-[2px] text-[#222] leading-[15px]">Поиск</span>
        </div>
      </div>
    </div>

    <!-- status bar -->
    <div class="h-[22px] shrink-0 bg-[#a4373a] flex items-center text-white text-[11px]">
      <span class="ml-[7px] w-[1158px]">Режим таблицы</span>
      <span class="w-[38px] h-[22px] bg-[#8c2e30] flex items-center justify-center">
        <svg class="w-[14px] h-[12px]" viewBox="0 0 14 12" fill="none" stroke="#fff"><rect x=".5" y=".5" width="13" height="11"/><path d="M.5 3.500h13M5 3.500v8M7 6.500h5M7 9h5"/></svg>
      </span>
      <span class="ml-[11px] w-[15px] text-[8px] font-semibold">SQL</span>
      <svg class="ml-[24px] w-[15px] h-[14px]" viewBox="0 0 15 14" fill="none" stroke="#fff"><path d="M1 0v9h9zM3 5v2h2"/><path d="m6 6 7-6 1 1-7 6" fill="#fff"/><rect x=".5" y="10.500" width="14" height="3"/></svg>
    </div>

    <!-- taskbar -->
    <div class="h-[40px] shrink-0 bg-[linear-gradient(90deg,#565656,#605c64_35%,#5c5a5e_75%,#565656)] flex items-center text-white">
      <svg class="ml-[11px] w-[27px] h-[28px]" viewBox="0 0 27 28" fill="#fff"><path d="M0 4l12-2v11H0zM13.500 1.800 27 0v13H13.500zM0 14.500h12v11l-12-2zM13.500 14.500H27V28l-13.500-2z"/></svg>
      <svg class="ml-[26px] w-[32px] h-[34px]" viewBox="0 0 32 34"><path d="M1 4h10l2 3h18v25H1z" fill="#e9cb6c"/><rect x="5" y="2" width="6" height="3" fill="#3cb44a"/><rect x="14" y="3" width="6" height="3" fill="#c94a3a"/><rect x="22" y="4" width="6" height="3" fill="#3d8ed0"/><path d="M4 14h25v18H4z" fill="#f3dc94"/><path d="M9 32V21h15v11h-3v-8h-9v8z" fill="#4fa8d8"/></svg>
      <svg class="ml-[32px] w-[30px] h-[33px]" viewBox="0 0 30 33"><circle cx="15" cy="17" r="15" fill="#e8e4dc"/><path d="M4 8A15 15 0 0 1 30 15L18 12z" fill="#d81e1e"/><path d="M6 3l9 11 9-12 5 3-11 14v13h-6V19L1 7z" fill="#e01b1b"/></svg>
      <div class="ml-[17px] w-[59px] h-[38px] bg-[#787878] border border-[#8c8c8c] flex items-center justify-center"><span class="w-[30px] h-[34px] bg-[#3f6597] flex items-center justify-center font-bold text-[20px] [font-family:'Liberation_Sans',sans-serif]">В</span></div>
      <div class="ml-[3px] w-[59px] h-[38px] bg-[#787878] border border-[#8c8c8c] flex items-center justify-center">
        <span class="w-[27px] h-[27px] rounded-[50%] bg-[#1eaae6] flex items-center justify-center font-bold text-[22px] leading-none [font-family:'Liberation_Sans',sans-serif]">S</span>
      </div>
      <div class="ml-[3px] w-[59px] h-[38px] bg-[#8a8688] border border-[#e0e0e0] flex items-center justify-center">
        <svg class="w-[30px] h-[34px]" viewBox="0 0 30 34"><ellipse cx="22" cy="7" rx="8" ry="3.500" fill="#d89a9a"/><path d="M14 7v21h8c5 0 8-1 8-3V7c-2 3-14 3-16 0z" fill="#fff"/><path d="M14 12c3 2 13 2 16 0M14 18c3 2 13 2 16 0" stroke="#a4373a" fill="none"/><path d="M0 4 15 1v32L0 30z" fill="#a4373a"/><path d="M3 23 7.500 10 12 23M4.500 19h6" stroke="#fff" stroke-width="2" fill="none"/></svg>
      </div>
      <div class="ml-[3px] w-[59px] h-[38px] bg-[#787878] border border-[#8c8c8c] flex items-center justify-center">
        <svg class="w-[30px] h-[34px]" viewBox="0 0 30 34"><rect x="12" y="5" width="17" height="25" fill="#fff" stroke="#2b579a"/><path d="M15 10h11M15 14h11M15 18h11M15 22h11M15 26h11" stroke="#2b579a"/><path d="M0 4 17 1v32L0 30z" fill="#2b579a"/><path d="m2 11 3 13 3-9 3 9 3-13" stroke="#fff" stroke-width="1.800" fill="none"/></svg>
      </div>
      <svg class="ml-[581px] w-[29px] h-[17px]" viewBox="0 0 29 17"><rect x=".5" y=".5" width="28" height="16" rx="1" fill="#fff" stroke="#222"/><path d="M3 4h23M3 7h23M3 10h23" stroke="#555" stroke-dasharray="2 1"/><rect x="9" y="12" width="11" height="2" fill="#555"/></svg>
      <svg class="ml-[15px] w-[8px] h-[4px] fill-white" viewBox="0 0 7 4"><path d="M0 4h7L3.500 0z"/></svg>
      <svg class="ml-[15px] w-[16px] h-[16px]" viewBox="0 0 16 16"><path d="M1 0v16" stroke="#fff" stroke-width="1.500"/><path d="M2 1h9v8H2z" fill="#eee"/><circle cx="11" cy="11" r="4.500" fill="#d9322e" stroke="#fff"/><path d="m9 9 4 4m0-4-4 4" stroke="#fff"/></svg>
      <svg class="ml-[9px] w-[12px] h-[18px]" viewBox="0 0 12 18"><rect x="1" y="2" width="9" height="16" fill="#222" stroke="#ddd"/><rect x="3" y="0" width="5" height="2" fill="#ddd"/><path d="M6 7l6 11H0z" fill="#f2c811"/><path d="M5.500 11h1v4h-1z" fill="#000"/></svg>
      <svg class="ml-[8px] w-[16px] h-[12px] fill-white" viewBox="0 0 16 12"><path d="M0 10h2v2H0zM3.500 8h2v4h-2zM7 5h2v7H7zM10.500 2.500h2V12h-2zM14 0h2v12h-2z"/></svg>
      <svg class="ml-[6px] w-[15px] h-[14px]" viewBox="0 0 15 14" fill="none" stroke="#fff"><path d="M0 4h3l4-4v14l-4-4H0z" fill="#ddd"/><path d="M9 4c1 2 1 4 0 6M11.500 2c2 3 2 7 0 10"/></svg>
      <span class="ml-[17px] w-[30px] text-[12px]">РУС</span>
      <div class="ml-[11px] w-[58px] flex flex-col items-center text-[11px] leading-[17px]"><span>16:30</span><span>18.06.2015</span></div>
    </div>
  </div>
</body>
</html>
